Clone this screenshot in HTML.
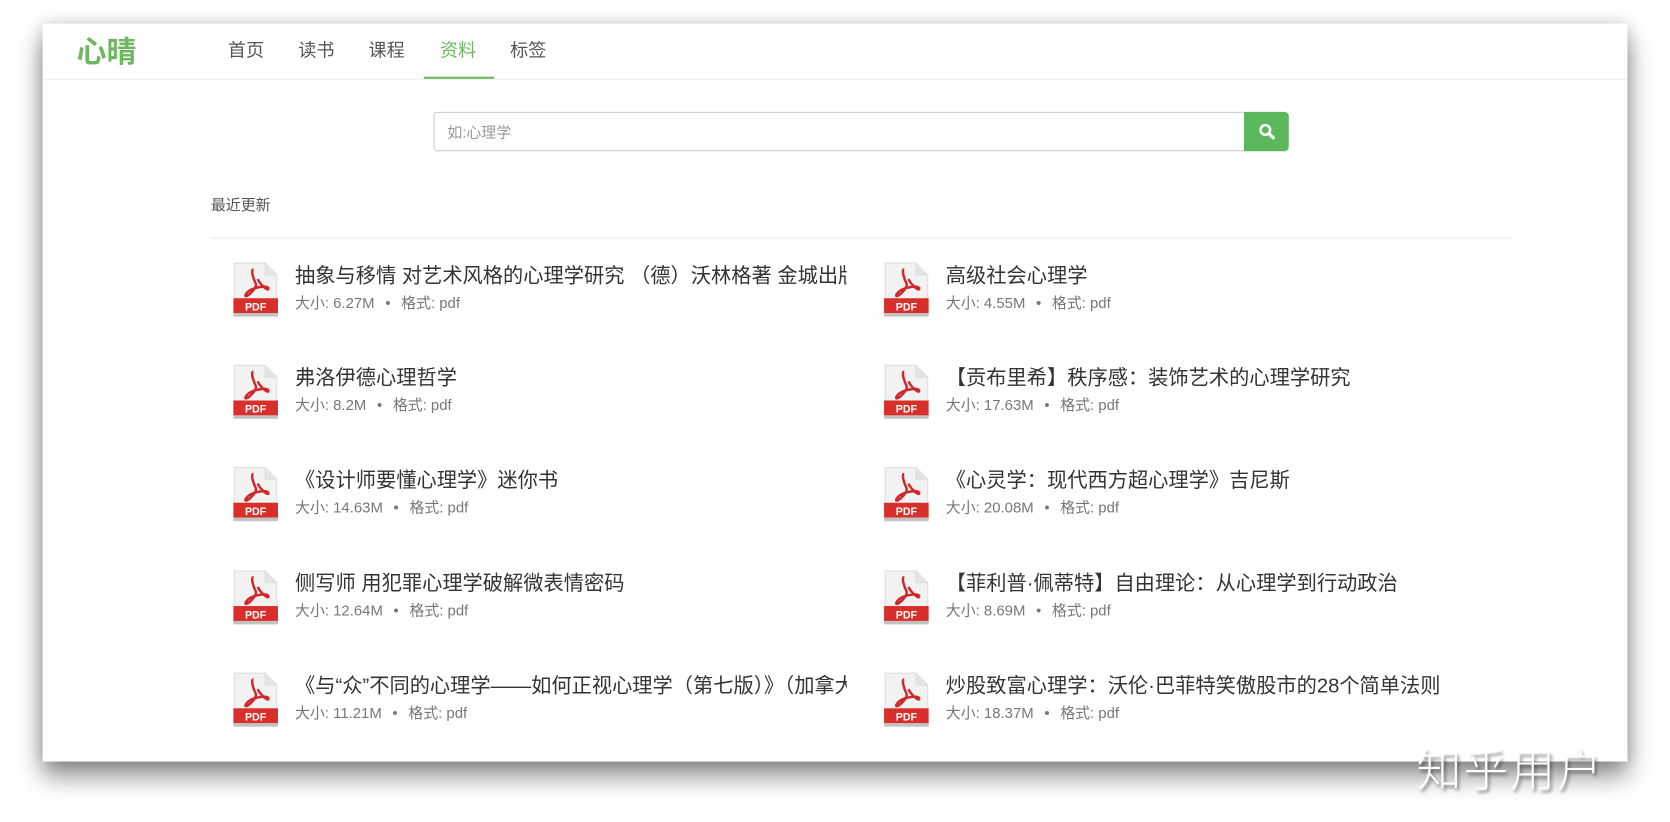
<!DOCTYPE html>
<html><head><meta charset="utf-8"><style>
html,body{margin:0;padding:0;width:1670px;height:822px;overflow:hidden;background:#fff;}
#w{position:absolute;left:0;top:0;width:1568px;height:772px;transform:scale(1.0651);transform-origin:0 0;font-family:"Liberation Sans","Noto Sans CJK SC",sans-serif;}
.card{position:absolute;left:40px;top:22px;width:1488px;height:693px;background:#fff;box-shadow:0 14px 22px rgba(0,0,0,.45),0 0 14px rgba(0,0,0,.18);}
.a{position:absolute;white-space:nowrap;}
.logo{left:72px;top:27px;font-size:28px;font-weight:bold;color:#6cb75f;}
.nav{top:33px;font-size:17px;color:#555;}
.nb{position:absolute;left:40px;top:74px;width:1488px;height:1px;background:#eee;}
.ul{position:absolute;left:398px;top:72px;width:66px;height:2px;background:#6cb75f;}
.in{position:absolute;left:407px;top:105px;width:760px;height:35px;border:1px solid #ccc;border-radius:3px 0 0 3px;}
.btn{position:absolute;left:1168px;top:105px;width:42px;height:37px;background:#5cb85c;border-radius:0 4px 4px 0;}
.t{font-size:19px;color:#333;}
.m{font-size:14px;color:#777;}
.d{margin:0 10px;}
.ic{position:absolute;width:42px;height:52px;}
.wm{left:1330px;top:690px;font-size:42px;color:#fff;letter-spacing:2px;font-weight:300;text-shadow:2px 3px 3px rgba(0,0,0,.45);}
</style></head><body><div id="w">
<div class="card"></div>
<div class="a logo">心晴</div>
<div class="a nav" style="left:214px">首页</div>
<div class="a nav" style="left:280px">读书</div>
<div class="a nav" style="left:346px">课程</div>
<div class="a nav" style="left:413px;color:#6cb75f">资料</div>
<div class="a nav" style="left:479px">标签</div>
<div class="nb"></div><div class="ul"></div>
<div class="in"></div>
<div class="a" style="left:420px;top:114px;font-size:14px;color:#999">如:心理学</div>
<div class="btn"><svg width="42" height="37" viewBox="0 0 42 37"><circle cx="20" cy="17" r="4.5" fill="none" stroke="#fff" stroke-width="2.4"/><path d="M23.5 20.5l4 4" stroke="#fff" stroke-width="3" stroke-linecap="round"/></svg></div>
<div class="a" style="left:198px;top:182px;font-size:14px;color:#555">最近更新</div>
<div style="position:absolute;left:198px;top:223px;width:1222px;height:1px;background:#eee"></div>

<svg width="0" height="0" style="position:absolute"><defs><symbol id="pdf" viewBox="0 0 42 52"><path d="M1 1h29l11 11v39H1z" fill="#f2f2f2" stroke="#ddd"/><path d="M30 1v11h11" fill="#e4e4e4" stroke="#ddd"/><path d="M19 7c-3 0 0 9 2 13s-7 12-9 12 1-5 7-7 14-3 14 0-8-4-10-9" fill="none" stroke="#d1262a" stroke-width="2.3"/><rect x="0" y="34" width="42" height="14" fill="#d82f2a"/><rect x="0" y="48" width="42" height="3" fill="#c2c2c2"/><text x="21" y="45.5" font-family="Liberation Sans" font-weight="bold" font-size="10" fill="#fff" text-anchor="middle">PDF</text></symbol></defs></svg>

<svg class="ic" style="left:219px;top:246px"><use href="#pdf"/></svg>
<div class="a t" style="left:277px;top:244px;width:518px;overflow:hidden">抽象与移情 对艺术风格的心理学研究 （德）沃林格著 金城出版社</div>
<div class="a m" style="left:277px;top:274px">大小: 6.27M<span class="d">•</span>格式: pdf</div>
<svg class="ic" style="left:830px;top:246px"><use href="#pdf"/></svg>
<div class="a t" style="left:888px;top:244px">高级社会心理学</div>
<div class="a m" style="left:888px;top:274px">大小: 4.55M<span class="d">•</span>格式: pdf</div>

<svg class="ic" style="left:219px;top:342px"><use href="#pdf"/></svg>
<div class="a t" style="left:277px;top:340px">弗洛伊德心理哲学</div>
<div class="a m" style="left:277px;top:370px">大小: 8.2M<span class="d">•</span>格式: pdf</div>
<svg class="ic" style="left:830px;top:342px"><use href="#pdf"/></svg>
<div class="a t" style="left:888px;top:340px">【贡布里希】秩序感：装饰艺术的心理学研究</div>
<div class="a m" style="left:888px;top:370px">大小: 17.63M<span class="d">•</span>格式: pdf</div>

<svg class="ic" style="left:219px;top:438px"><use href="#pdf"/></svg>
<div class="a t" style="left:277px;top:436px">《设计师要懂心理学》迷你书</div>
<div class="a m" style="left:277px;top:466px">大小: 14.63M<span class="d">•</span>格式: pdf</div>
<svg class="ic" style="left:830px;top:438px"><use href="#pdf"/></svg>
<div class="a t" style="left:888px;top:436px">《心灵学：现代西方超心理学》吉尼斯</div>
<div class="a m" style="left:888px;top:466px">大小: 20.08M<span class="d">•</span>格式: pdf</div>

<svg class="ic" style="left:219px;top:535px"><use href="#pdf"/></svg>
<div class="a t" style="left:277px;top:533px">侧写师 用犯罪心理学破解微表情密码</div>
<div class="a m" style="left:277px;top:563px">大小: 12.64M<span class="d">•</span>格式: pdf</div>
<svg class="ic" style="left:830px;top:535px"><use href="#pdf"/></svg>
<div class="a t" style="left:888px;top:533px">【菲利普·佩蒂特】自由理论：从心理学到行动政治</div>
<div class="a m" style="left:888px;top:563px">大小: 8.69M<span class="d">•</span>格式: pdf</div>

<svg class="ic" style="left:219px;top:631px"><use href="#pdf"/></svg>
<div class="a t" style="left:277px;top:629px;width:518px;overflow:hidden">《与“众”不同的心理学——如何正视心理学（第七版）》（加拿大）</div>
<div class="a m" style="left:277px;top:659px">大小: 11.21M<span class="d">•</span>格式: pdf</div>
<svg class="ic" style="left:830px;top:631px"><use href="#pdf"/></svg>
<div class="a t" style="left:888px;top:629px">炒股致富心理学：沃伦·巴菲特笑傲股市的28个简单法则</div>
<div class="a m" style="left:888px;top:659px">大小: 18.37M<span class="d">•</span>格式: pdf</div>

<div class="a wm">知乎用户</div>
</div></body></html>
